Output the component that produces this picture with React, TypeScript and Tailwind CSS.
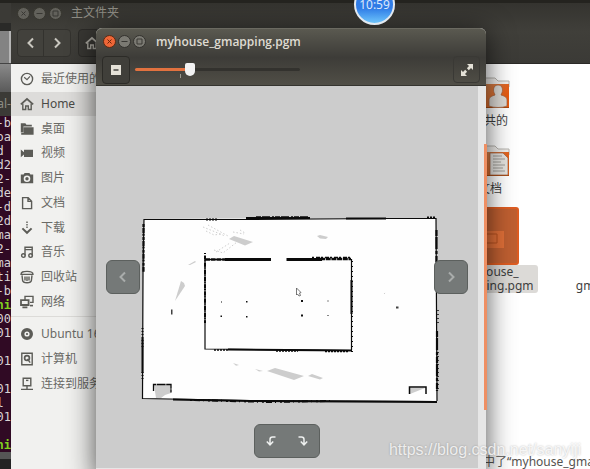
import type { ReactNode } from "react";
import clsx from "clsx";

const terminalLines = [
  { text: "-b" },
  { text: "oa" },
  { text: "d " },
  { text: "d2" },
  { text: "2-" },
  { text: "de" },
  { text: "-d" },
  { text: "2d" },
  { text: "ma" },
  { text: "2-" },
  { text: "ma" },
  { text: "ti" },
  { text: "-b" },
  { text: "ni", prompt: true },
  { text: "00" },
  { text: "01" },
  { text: "  " },
  { text: "01" },
  { text: "  " },
  { text: "01" },
  { text: "l " },
  { text: "01" },
  { text: "  " },
  { text: "ni", prompt: true },
];

const icons: Record<string, ReactNode> = {
  recent: (
    <>
      <circle cx="7" cy="7" r="5.6" />
      <path d="M4.2 5.2 7 7.6l3-3.2" strokeWidth="1.2" />
    </>
  ),
  home: (
    <>
      <path d="M.8 7.4 7 2l6.2 5.4" strokeWidth="1.7" />
      <path d="M2.8 6.5v6h2.9V9h2.6v3.5h2.9v-6" />
    </>
  ),
  desktop: (
    <path
      d="M.8 1.2h4.6l1 1.600h5.400v1.600H3.400v6H.8zM3.600 5.200h10v7.600H1.200V11h2.400z"
      fill="currentColor"
      stroke="none"
    />
  ),
  video: (
    <path
      d="M.8 3.6 4 6.2V3.8h9v7.2H4V8.6L.8 11.2z"
      fill="currentColor"
      stroke="none"
    />
  ),
  pictures: (
    <>
      <path
        fillRule="evenodd"
        d="M4.6 2h4.8l1 1.6h2.8v8.6H.8V3.6h2.8zM7 4.4a3.3 3.3 0 1 0 0 6.6 3.3 3.3 0 0 0 0-6.6z"
        fill="currentColor"
        stroke="none"
      />
      <circle cx="7" cy="7.7" r="1.7" fill="currentColor" stroke="none" />
    </>
  ),
  documents: <path d="M2.6 1.6h5.6l3.4 3.6v7.4h-9zM8 1.8v3.6h3.4" />,
  downloads: (
    <>
      <path d="M7 .6v7" strokeDasharray="1.5 1" />
      <path d="M2.4 7.4 7 11.8l4.6-4.4" strokeWidth="2" />
    </>
  ),
  music: (
    <>
      <path d="M5 10.4V2.2h7.2v8.2M5 4.6h7.2" />
      <circle cx="3.4" cy="10.6" r="1.8" />
      <circle cx="10.6" cy="10.6" r="1.8" />
    </>
  ),
  trash: (
    <>
      <path d="M1 4.4C1 2 3 1.4 7 1.4s6 .6 6 3z" />
      <path d="M2 5.4l.6 5c.2 1.6 1.4 2.4 4.4 2.4s4.2-.8 4.4-2.4l.6-5M5 6.4v4M7 6.4V11M9 6.4v4" />
    </>
  ),
  network: (
    <>
      <path d="M5 5V1.4h8v6h-3" />
      <path d="M1 5.2h7.6V10H1zM2.4 12.4h5" strokeWidth="1.8" />
      <path d="M10 10.6h3" strokeWidth="1.6" />
    </>
  ),
  disc: (
    <path
      fillRule="evenodd"
      d="M7 1a6 6 0 1 0 0 12A6 6 0 0 0 7 1zm0 3.4a2.6 2.6 0 1 1 0 5.2 2.6 2.6 0 0 1 0-5.2zm0 1.5a1.1 1.1 0 1 0 0 2.2 1.1 1.1 0 0 0 0-2.2z"
      fill="currentColor"
      stroke="none"
    />
  ),
  computer: (
    <>
      <path d="M1.8 1.2h10.4v11.6H1.8z" />
      <circle cx="7" cy="6" r="2.4" strokeWidth="1.7" />
      <path d="m7.4 7 2.8 3.6" />
    </>
  ),
  server: (
    <>
      <path d="M3.2 1.2h7.6v7.6H3.2zM7 9v3M1 12.4h12" />
      <path d="M6 3.4h2.4" />
    </>
  ),
};

const places = [
  { icon: "recent", label: "最近使用的" },
  { icon: "home", label: "Home", active: true },
  { icon: "desktop", label: "桌面" },
  { icon: "video", label: "视频" },
  { icon: "pictures", label: "图片" },
  { icon: "documents", label: "文档" },
  { icon: "downloads", label: "下载" },
  { icon: "music", label: "音乐" },
  { icon: "trash", label: "回收站" },
  { icon: "network", label: "网络" },
];

const devices = [
  { icon: "disc", label: "Ubuntu 16.04" },
  { icon: "computer", label: "计算机" },
  { icon: "server", label: "连接到服务器" },
];

function Icon({ name, className }: { name: string; className?: string }) {
  return (
    <svg
      viewBox="0 0 14 14"
      fill="none"
      stroke="currentColor"
      strokeWidth="1.4"
      className={clsx("size-[14px] shrink-0", className)}
      aria-hidden="true"
    >
      {icons[name]}
    </svg>
  );
}

function PlaceRow({
  icon,
  label,
  active,
}: {
  icon: string;
  label: string;
  active?: boolean;
}) {
  return (
    <li className="flex flex-1">
      <a
        href="#"
        className={clsx(
          "flex flex-1 items-center gap-[7px] pl-[9px] whitespace-nowrap",
          active ? "bg-[#dddcda] text-[#4a4a46]" : "text-[#6a6a66]"
        )}
      >
        <Icon name={icon} className="text-[#5c5c57]" />
        {label}
      </a>
    </li>
  );
}

function WindowButtons({ focused }: { focused?: boolean }) {
  const base = "grid size-[13px] place-items-center rounded-full border";
  const idle = focused
    ? "border-[#33322e] bg-[#7b7a73] text-[#3a3935]"
    : "border-[#37362f] bg-[#62615b] text-[#393834]";
  return (
    <div className={clsx("flex", focused ? "gap-[2px]" : "gap-[3px]")}>
      <button
        aria-label="关闭"
        className={clsx(
          base,
          focused ? "border-[#5a2a14] bg-[#ee6637] text-[#6b2509]" : idle
        )}
      >
        <svg viewBox="0 0 7 7" className="size-[7px]" stroke="currentColor">
          <path d="m1.5 1.5 4 4m0-4-4 4" />
        </svg>
      </button>
      <button aria-label="最小化" className={clsx(base, idle)}>
        <svg viewBox="0 0 7 7" className="size-[7px]" stroke="currentColor">
          <path d="M.5 3.5h6" />
        </svg>
      </button>
      <button aria-label="最大化" className={clsx(base, idle)}>
        <svg
          viewBox="0 0 7 7"
          className="size-[7px]"
          fill="none"
          stroke="currentColor"
        >
          <path d="M1 1h5v5H1z" />
        </svg>
      </button>
    </div>
  );
}

function Chevron({ left, className }: { left?: boolean; className?: string }) {
  return (
    <svg
      viewBox="0 0 12 12"
      fill="none"
      stroke="currentColor"
      strokeWidth="2"
      className={clsx("size-3", className)}
      aria-hidden="true"
    >
      <path d={left ? "M8 1.5 3.5 6 8 10.5" : "M4 1.5 8.500 6 4 10.5"} />
    </svg>
  );
}

function Folder({ children }: { children: ReactNode }) {
  return (
    <svg viewBox="0 0 40 32" className="h-8 w-10" aria-hidden="true">
      <defs>
        <linearGradient id="folder" x1="0" y1="0" x2="1" y2="0.4">
          <stop offset="0.4" stopColor="#d5824c" />
          <stop offset="1" stopColor="#e8590f" />
        </linearGradient>
      </defs>
      <path
        d="M1 8V1h24l3 3h11v6"
        fill="#f1efec"
        stroke="#b7b4ae"
        strokeWidth="1"
      />
      <path d="M0 7h39v24H0z" fill="url(#folder)" />
      <path d="M0 30.500h39" stroke="#a9480f" />
      {children}
    </svg>
  );
}

function FileManager() {
  return (
    <section className="absolute inset-y-0 left-[11px] right-0 flex flex-col bg-white">
      <header className="border-b border-[#2b2a27] bg-linear-to-b from-[#33322e] via-[#403f3a] to-[#3b3a36] pt-px pb-1.5">
        <div className="flex h-6 items-center gap-[9px] pl-1.5">
          <WindowButtons />
          <h1 className="text-[12px] text-[#8e8c84]">主文件夹</h1>
        </div>
        <nav className="mt-1 flex h-7 gap-[7px] pl-1.5 text-[#c9c7bf]">
          <div className="flex divide-x divide-[#33322e] rounded-[4px] border border-[#33322e] bg-[#42413c]">
            <button aria-label="后退" className="grid w-[26px] place-items-center">
              <Chevron left />
            </button>
            <button aria-label="前进" className="grid w-[26px] place-items-center">
              <Chevron />
            </button>
          </div>
          <button
            aria-label="主文件夹"
            className="flex w-24 items-center rounded-[4px] border border-[#2c2b28] bg-[#383733] pl-1.5 text-[#a9a79f]"
          >
            <Icon name="home" />
          </button>
        </nav>
      </header>

      <div className="flex min-h-0 flex-1">
        <aside className="w-[154px] shrink-0 border-r border-[#d0cfcc] bg-[#f1f1ef] pt-[3px] text-[12px]">
          <ul className="flex h-[247px] flex-col">
            {places.map((place) => (
              <PlaceRow key={place.label} {...place} />
            ))}
          </ul>
          <ul className="mt-[2px] flex h-[80px] flex-col border-t border-[#dcdbd8] pt-[5px]">
            {devices.map((device) => (
              <PlaceRow key={device.label} {...device} />
            ))}
          </ul>
        </aside>

        <main className="relative grid flex-1 auto-rows-[68px] grid-cols-[repeat(4,130px)] overflow-hidden pt-[13px] text-center text-[12px] leading-[14px] text-[#3f3f3f]">
          <figure className="col-start-3 flex flex-col items-center gap-[5px]">
            <Folder>
              <path
                d="M28 8c3 0 4.500 2 4.500 5 0 2-1 3.500-1.500 5 3 1 6 2 6 5v6c-5 2-13 2-18 0v-6c0-3 3-4 6-5-.5-1.500-1.500-3-1.500-5 0-3 1.500-5 4.500-5z"
                fill="#dedbd6"
                stroke="#a3603a"
                strokeWidth="0.7"
              />
            </Folder>
            <figcaption>公共的</figcaption>
          </figure>
          <figure className="col-start-3 flex flex-col items-center gap-[5px]">
            <Folder>
              <path
                d="M20 8h13l5 5v17H20z"
                fill="#e6e4e0"
                stroke="#a3603a"
                strokeWidth="0.7"
              />
              <path
                d="M23 11h9M23 14h12M23 17h8M23 20h12M23 23h10M23 26h12"
                stroke="#96938e"
                strokeWidth="0.9"
              />
            </Folder>
            <figcaption>文档</figcaption>
          </figure>
          <figure className="col-start-3 flex flex-col items-center">
            <svg
              viewBox="0 0 58 58"
              className="h-[58px] w-[58px] shrink-0 -mt-[6px]"
              aria-hidden="true"
            >
              <rect
                x="1"
                y="1"
                width="56"
                height="56"
                rx="2"
                fill="#bf5f31"
                stroke="#dd5c22"
                strokeWidth="2"
              />
              <path d="M15 24h28v17H15z" fill="#e06f38" />
              <path
                d="M20 27h16v9H20z"
                fill="none"
                stroke="#b5501f"
                strokeWidth="1"
              />
            </svg>
            <figcaption className="rounded-[3px] bg-[#dcdad7] px-1">
              myhouse_
              <br />
              gmapping.pgm
            </figcaption>
          </figure>
          <figure className="col-start-4 row-start-3 flex flex-col items-center pt-[52px]">
            <figcaption>
              myhouse_
              <br />
              gmapping.yaml
            </figcaption>
          </figure>
          <p className="absolute bottom-0 right-0 w-[119px] whitespace-nowrap text-left text-[#55534f]">
            选中了“myhouse_gmapping.pgm”
          </p>
        </main>
      </div>
    </section>
  );
}

// Occupancy grid: white is free space, black is wall, grey is unexplored.
function OccupancyMap() {
  return (
    <svg
      viewBox="96 86 382 382"
      className="h-full w-full"
      role="img"
      aria-label="myhouse_gmapping.pgm"
    >
      <path
        d="M144 219 246 218.500 386 218 436 218.500 437 401 250 400.500 142 398.500z"
        fill="#fefefe"
      />

      <g fill="#cdcdcd">
        <path d="m229 239 5-3 19 6-8 3.500z" />
        <path d="m175 301 6-20 3 2 1 3z" />
        <path d="m188 265 7-4 1 1-6 3z" />
        <path d="m317 236 3-1 8 2-2 2-6-.5z" />
        <path d="m267 371 8-3 29 8-10 4z" />
        <path d="m308 376 4-2 11 4-3 1.500z" />
        <path d="m233 363 6 2-3 .8zM255 369l8 2-4 .6zM245 367l4 1z" />
        <path d="M154 385h17v8l-6 2-4 3h-5z" />
        <path d="m410 388h15l-15 6z" />
      </g>
      <g fill="none" stroke="#cfcfcf" strokeDasharray="1.500 2">
        <path d="m203 227 10 4 12 5M206 231l8 4 7-1M208 225l20 11" />
        <path d="m214 250 9 3 14-11M216 252l14-9M233 232l11 2M240 230l5 3M384 294l2-2" />
      </g>

      <g fill="none" stroke="#0a0a0a" strokeWidth="1.200">
        <path d="M144 219.500h102L386 218.500h50M144 219 143 270 142.500 398.500 250 400.500 437 401.500M436 218l1 183" />
        <path
          d="M143.500 224v48"
          strokeWidth="2.200"
          strokeDasharray="3 1 5 .7 2 1.200"
        />
        <path
          d="M142.500 328v20M142.500 372v8"
          strokeWidth="2"
          strokeDasharray="1 2"
        />
        <path d="M142.500 338v35" strokeWidth="2" />
        <path d="M246 218h64M346 218.500h40" strokeWidth="2" />
        <path
          d="M256 217h54"
          strokeWidth="1.500"
          strokeDasharray="5 1 8 2 2 1"
        />
        <path
          d="M206 219.500h12M427 217.500h9"
          strokeWidth="2"
          strokeDasharray="2 1"
        />
        <path
          d="M436.500 230v40M437 331v60"
          strokeWidth="2.200"
          strokeDasharray="6 1 12 2 3 2"
        />
        <path
          d="M438 310v14M438 352v40"
          strokeDasharray="1 3"
          strokeWidth="1.500"
        />
        <path d="m173 399.500 77 1.500 187 1" strokeWidth="2" />
        <path
          d="m190 400 80 2 60-1"
          strokeWidth="2"
          strokeDasharray="2 2 6 3 1 4"
        />

        <path d="M205 259v90l147 1.500M351.500 259v91M205 259.500h20" />
        <path d="M225 259.500h46M286.500 259.500H322" strokeWidth="3" />
        <path
          d="M205 259.500h24M320 259h31"
          strokeWidth="2.500"
          strokeDasharray="5 .7"
        />
        <path
          d="M312 257.500h38"
          strokeWidth="1.500"
          strokeDasharray="2 2 4 1"
        />
        <path
          d="M205 253v70"
          strokeWidth="2"
          strokeDasharray="1 1.500 4 .7"
        />
        <path d="M228 349.500 352 350.500" strokeWidth="2" />
        <path
          d="M214 350h14M276 351h22M325 351.500h24"
          strokeWidth="1.500"
          strokeDasharray="2 1"
        />
        <path d="M351.500 280v34" strokeWidth="2" />
        <path d="M352 261v92" strokeWidth="2" strokeDasharray="1 4" />

        <path
          d="M153.500 391v-6.500H171v8"
          strokeWidth="1.300"
          strokeDasharray="9 .6"
        />
        <path d="M409.500 394v-7H426v7" strokeWidth="1.500" />
      </g>

      <g fill="#111">
        <path d="M301 300h2v2h-2zM301 314.500h2v2h-2zM246 301h1.500v1.500H246zM246 316h1.500v1.500H246zM220.500 315.500h1.500v1.500h-1.500zM221 301.500h1v1h-1zM327.500 300.500h1v1h-1zM327.500 315h1v1h-1z" />
        <path
          d="M171 309.500h1.500v5H171zM396 306.500h2.500v2H396z"
          opacity="0.8"
        />
      </g>

      {/* mouse pointer */}
      <path
        d="m296.500 288 4.500 4.500-1.500.5 1 2.500-1.500.5-1.500-2-1 1z"
        fill="#fff"
        stroke="#555"
        strokeWidth="0.8"
      />
    </svg>
  );
}

function ImageViewer() {
  const overlay =
    "absolute flex h-[34px] items-center rounded-md border border-[#5c605e] bg-[#757978]";
  return (
    <section className="absolute -bottom-2 left-24 right-[104px] top-7 flex flex-col rounded-t-md bg-[#e6e6e6] shadow-[0_4px_28px_rgba(0,0,0,0.7)]">
      <header className="rounded-t-md border-t border-[#6b6a61] bg-linear-to-b from-[#5a5950] via-[#3d3c38] to-[#514f47]">
        <div className="flex h-[25px] items-center gap-[10px] pl-[7px]">
          <WindowButtons focused />
          <h2 className="font-['Open_Sans',sans-serif] text-[12px] font-semibold text-[#dfdbd2]">
            myhouse_gmapping.pgm
          </h2>
        </div>
        <div className="flex h-8 items-center border-b border-[#35342f] px-1.5">
          <button
            aria-label="缩小"
            className="grid size-7 place-items-center rounded-[4px] border border-[#2c2b27] bg-[#403f3a]"
          >
            <svg viewBox="0 0 10 10" className="size-[10px]">
              <path d="M0 0h10v10H0z" fill="#e4e1d7" />
              <path d="M2.500 5h5" stroke="#3c3b37" strokeWidth="1.400" />
            </svg>
          </button>
          <div className="relative ml-[5px] flex items-center">
            <input
              type="range"
              aria-label="缩放"
              defaultValue={32}
              className="h-4 w-[165px] appearance-none bg-transparent [&::-webkit-slider-runnable-track]:h-[3px] [&::-webkit-slider-runnable-track]:rounded-full [&::-webkit-slider-runnable-track]:bg-linear-to-r [&::-webkit-slider-runnable-track]:from-[#e2723f] [&::-webkit-slider-runnable-track]:from-33% [&::-webkit-slider-runnable-track]:to-[#33322e] [&::-webkit-slider-runnable-track]:to-33% [&::-webkit-slider-thumb]:-mt-[5px] [&::-webkit-slider-thumb]:h-[13px] [&::-webkit-slider-thumb]:w-[10px] [&::-webkit-slider-thumb]:appearance-none [&::-webkit-slider-thumb]:rounded-t-[2px] [&::-webkit-slider-thumb]:rounded-b-[5px] [&::-webkit-slider-thumb]:bg-[#f2f2f2]"
            />
            <span className="absolute left-[45px] top-3 h-1 w-px bg-[#9a988f]" />
          </div>
          <button
            aria-label="全屏"
            className="ml-auto grid size-[27px] place-items-center rounded-[4px] border border-[#3a3935] text-[#e4e1d7]"
          >
            <svg viewBox="0 0 12 12" className="size-3" fill="currentColor">
              <path d="M6 0h6v6l-2-2-2.200 2.200-1.900-1.900L8 2.100zM6 12H0V6l2 2 2.200-2.200 1.900 1.900L4 9.900z" />
            </svg>
          </button>
        </div>
      </header>

      <div className="relative mr-2 mb-[9px] min-h-0 flex-1 bg-[#cccccc]">
        <OccupancyMap />
        <button
          aria-label="上一张"
          className={clsx(
            overlay,
            "left-[10px] top-1/2 w-[34px] -translate-y-1/2 justify-center text-[#a9acab]"
          )}
        >
          <Chevron left />
        </button>
        <button
          aria-label="下一张"
          className={clsx(
            overlay,
            "right-[10px] top-1/2 w-[34px] -translate-y-1/2 justify-center text-[#a9acab]"
          )}
        >
          <Chevron />
        </button>
        <div
          className={clsx(
            overlay,
            "bottom-[10px] left-1/2 w-[66px] -translate-x-1/2 text-[#eef0ef]"
          )}
        >
          <button aria-label="向左旋转" className="grid flex-1 place-items-center">
            <svg
              viewBox="0 0 10 10"
              className="size-[10px]"
              fill="none"
              stroke="currentColor"
              strokeWidth="1.500"
            >
              <path d="M9.500 1H6.500Q4 1 4 3.500V8.500M.8 5.500 4 8.800l3.200-3.300" />
            </svg>
          </button>
          <button aria-label="向右旋转" className="grid flex-1 place-items-center">
            <svg
              viewBox="0 0 10 10"
              className="size-[10px]"
              fill="none"
              stroke="currentColor"
              strokeWidth="1.500"
            >
              <path d="M.5 1h3Q6 1 6 3.500V8.500M2.800 5.500 6 8.800l3.200-3.300" />
            </svg>
          </button>
        </div>
      </div>
      <div className="absolute -right-px bottom-[67px] top-[116px] w-[3px] bg-[#ee8f63]" />
    </section>
  );
}

export default function App() {
  return (
    <div className="relative h-screen overflow-hidden bg-[#2b2a27] font-['Noto_Sans','Noto_Sans_CJK_SC',sans-serif]">
      {/* terminal, mostly hidden behind the file manager */}
      <section className="absolute inset-y-0 left-0 flex w-[11px] flex-col overflow-hidden">
        <div className="h-[23px] bg-[#3b3a36]" />
        <div className="h-2 bg-[#2a2a28]" />
        <div className="h-8 border-r-2 border-[#b5b5b5] bg-[#838383]" />
        <div className="h-[29px] border-t border-[#444] bg-linear-to-b from-[#8a8a8a] to-[#5a5a5a]" />
        <div className="flex h-[24px] items-center justify-end bg-[#3b3a36] text-[12px] text-[#8e8c84]">
          al-
        </div>
        <pre className="flex h-[336px] flex-col items-end bg-[#300a24] font-['DejaVu_Sans_Mono',monospace] text-[12px] leading-[14px] text-[#d8d3d6]">
          {terminalLines.map((line, i) => (
            <span
              key={i}
              className={clsx(
                "h-[14px]",
                line.prompt && "font-bold text-[#7fd41f]"
              )}
            >
              {line.text}
            </span>
          ))}
        </pre>
        <div className="h-[7px] bg-[#555]" />
        <div className="flex-1 bg-[#232323]" />
      </section>

      <FileManager />
      <ImageViewer />

      <div className="absolute inset-x-0 top-0 h-[3px] bg-[#24231f]" />
      <time className="absolute -top-4 left-[354px] flex size-[41px] items-center justify-center rounded-full border-2 border-[#e3e9f0] bg-linear-to-b from-[#2f7be6] from-60% to-[#6fc4fa] text-[12px] text-[#dbe8fb]">
        10:59
      </time>
      <p className="absolute right-[9px] bottom-[7px] font-['Liberation_Sans',sans-serif] text-[16px] text-white/80 [text-shadow:0_0_2px_rgba(0,0,0,0.3)]">
        https://blog.csdn.net/sanyiji
      </p>
    </div>
  );
}
